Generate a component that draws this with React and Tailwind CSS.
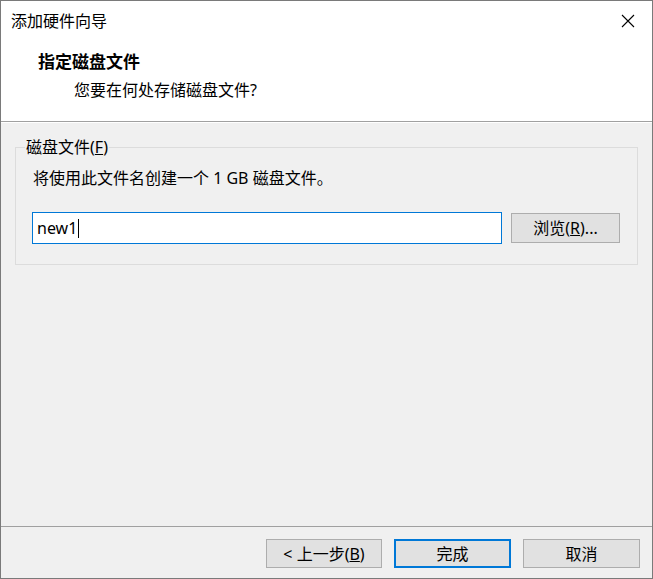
export default function App() {
  return (
    <div className="w-[653px] h-[579px] bg-white border border-[#7a7a7a] flex flex-col font-['Noto_Sans','Noto_Sans_CJK_SC',sans-serif] text-[15px] text-black leading-[22px]">
      {/* title bar */}
      <div className="h-[39px] flex items-center justify-between pl-[10px] pr-[17px]">
        <span className="text-[16px]">添加硬件向导</span>
        <svg width="14" height="14" viewBox="0 0 14 14" className="text-black">
          <path d="M1 1 L13 13 M13 1 L1 13" stroke="currentColor" strokeWidth="1.1" fill="none" />
        </svg>
      </div>

      {/* header */}
      <div className="pt-[11px] pb-[20px] border-b border-[#a0a0a0]">
        <div className="pl-[37px] font-bold text-[17px]">指定磁盘文件</div>
        <div className="pl-[73px] mt-[6px] text-[16px]">您要在何处存储磁盘文件?</div>
      </div>

      {/* body */}
      <div className="flex-1 bg-[#f0f0f0] border-t border-white pt-[13px]">
        <fieldset className="ml-[14px] w-[623px] border border-[#dcdcdc] pb-[20px]">
          <legend className="ml-[9px] px-[1px] text-[16px]">
            磁盘文件(<span className="underline">F</span>)
          </legend>
          <div className="pl-[17px] mt-[9px] text-[16px]">将使用此文件名创建一个 1 GB 磁盘文件。</div>
          <div className="flex items-center gap-[9px] pl-[16px] mt-[23px]">
            <div className="w-[470px] h-[32px] bg-white border border-[#0078d7] flex items-center pl-[4px] text-[16px]">
              <span>new1</span>
              <span className="w-[1px] h-[19px] bg-black ml-[1px]" />
            </div>
            <button className="w-[109px] h-[30px] bg-[#e1e1e1] border border-[#adadad] text-[16px]">
              浏览(<span className="underline">R</span>)...
            </button>
          </div>
        </fieldset>
      </div>

      {/* footer */}
      <div className="bg-[#f0f0f0] border-t border-[#a0a0a0] h-[52px] flex justify-end items-start pt-[12px] pr-[12px] gap-[12px]">
        <button className="w-[116px] h-[29px] bg-[#e1e1e1] border border-[#adadad] text-[16px]">
          &lt; 上一步(<span className="underline">B</span>)
        </button>
        <button className="w-[117px] h-[29px] bg-[#e1e1e1] border-2 border-[#0078d7] text-[16px]">完成</button>
        <button className="w-[117px] h-[29px] bg-[#e1e1e1] border border-[#adadad] text-[16px]">取消</button>
      </div>
    </div>
  );
}
